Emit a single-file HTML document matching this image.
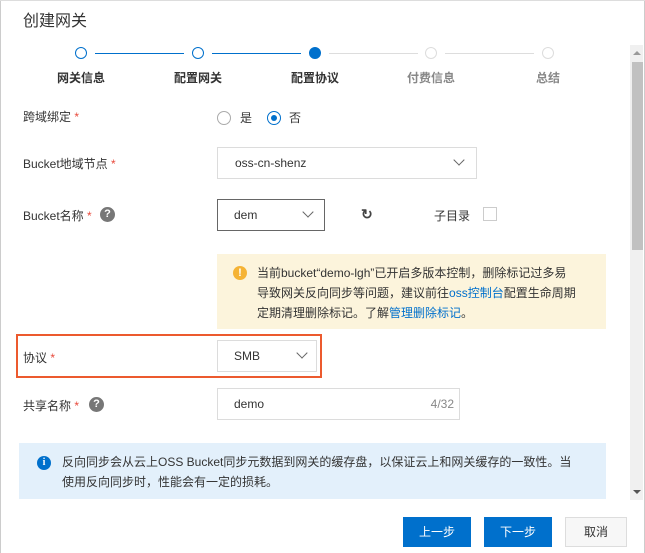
<!DOCTYPE html>
<html><head><meta charset="utf-8"><style>
*{box-sizing:border-box;margin:0;padding:0}
body{width:645px;height:553px;background:#fff;position:relative;overflow:hidden;font-family:"Liberation Sans","Noto Sans CJK SC",sans-serif;color:#333;font-size:12px}
.a{position:absolute}
.lbl{position:absolute;left:23px;font-size:12px;color:#333}
.req{color:#e84a3c}
.box{position:absolute;border:1px solid #dcdcdc;background:#fff}
.chev{position:absolute;width:8px;height:8px;border-right:1.5px solid #666;border-bottom:1.5px solid #666;transform:rotate(45deg)}
.step{position:absolute;top:47px;width:12px;height:12px;border-radius:50%;border:1.5px solid #0070cc;background:#fff}
.sl{position:absolute;top:53px;height:1px}
.st{position:absolute;top:69px;font-size:12px;font-weight:bold;width:80px;text-align:center}
.q{position:absolute;width:15px;height:15px;border-radius:50%;background:#777;color:#fff;font-size:11px;font-weight:bold;text-align:center;line-height:15px}
.btn{position:absolute;top:517px;height:30px;font-size:12px;text-align:center;line-height:30px}
</style></head><body>
<div class="a" style="left:0;top:0;width:1px;height:553px;background:#ccc"></div>
<div class="a" style="left:644px;top:0;width:1px;height:553px;background:#ccc"></div>
<div class="a" style="left:0;top:0;width:645px;height:1px;background:#ddd"></div>
<div class="a" style="left:23px;top:7px;font-size:16px;color:#333">创建网关</div>

<div class="step" style="left:75px"></div>
<div class="sl" style="left:95px;width:89px;background:#0070cc"></div>
<div class="step" style="left:192px"></div>
<div class="sl" style="left:212px;width:89px;background:#0070cc"></div>
<div class="step" style="left:309px;background:#0070cc;border-color:#0070cc"></div>
<div class="sl" style="left:329px;width:89px;background:#ddd"></div>
<div class="step" style="left:425px;border-color:#ddd"></div>
<div class="sl" style="left:445px;width:89px;background:#ddd"></div>
<div class="step" style="left:542px;border-color:#ddd"></div>
<div class="st" style="left:41px;color:#333">网关信息</div>
<div class="st" style="left:158px;color:#333">配置网关</div>
<div class="st" style="left:275px;color:#333">配置协议</div>
<div class="st" style="left:391px;color:#888">付费信息</div>
<div class="st" style="left:508px;color:#888">总结</div>

<div class="lbl" style="top:108px">跨域绑定 <span class="req">*</span></div>
<div class="a" style="left:217px;top:111px;width:14px;height:14px;border-radius:50%;border:1px solid #aaa"></div>
<div class="a" style="left:240px;top:109px">是</div>
<div class="a" style="left:267px;top:111px;width:14px;height:14px;border-radius:50%;border:1.5px solid #0070cc"><div class="a" style="left:2.5px;top:2.5px;width:6px;height:6px;border-radius:50%;background:#0070cc"></div></div>
<div class="a" style="left:289px;top:109px">否</div>

<div class="lbl" style="top:155px">Bucket地域节点 <span class="req">*</span></div>
<div class="box" style="left:217px;top:147px;width:260px;height:32px"><span class="a" style="left:17px;top:8px">oss-cn-shenz</span><div class="chev" style="left:237px;top:8px"></div></div>

<div class="lbl" style="top:207px">Bucket名称 <span class="req">*</span></div>
<div class="q" style="left:100px;top:207px">?</div>
<div class="box" style="left:217px;top:199px;width:108px;height:32px;border-color:#666"><span class="a" style="left:16px;top:8px">dem</span><div class="chev" style="left:86px;top:8px"></div></div>
<div class="a" style="left:361px;top:206px;font-size:14px;font-weight:bold;color:#444">↻</div>
<div class="a" style="left:434px;top:207px">子目录</div>
<div class="a" style="left:483px;top:207px;width:14px;height:14px;border:1px solid #ccc"></div>

<div class="a" style="left:217px;top:254px;width:389px;height:75px;background:#fcf4dc"></div>
<div class="a" style="left:233px;top:266px;width:14px;height:14px;border-radius:50%;background:#f5b335;color:#fff;font-size:11px;font-weight:bold;text-align:center;line-height:14px">!</div>
<div class="a" style="left:257px;top:263px;width:350px;line-height:20px;color:#333">当前bucket“demo-lgh”已开启多版本控制，删除标记过多易<br>导致网关反向同步等问题，建议前往<span style="color:#0070cc">oss控制台</span>配置生命周期<br>定期清理删除标记。了解<span style="color:#0070cc">管理删除标记</span>。</div>

<div class="a" style="left:16px;top:334px;width:306px;height:44px;border:2px solid #ec5a2e"></div>
<div class="lbl" style="top:349px">协议 <span class="req">*</span></div>
<div class="box" style="left:217px;top:340px;width:100px;height:32px"><span class="a" style="left:16px;top:8px">SMB</span><div class="chev" style="left:80px;top:8px"></div></div>

<div class="lbl" style="top:397px">共享名称 <span class="req">*</span></div>
<div class="q" style="left:89px;top:397px">?</div>
<div class="box" style="left:217px;top:388px;width:243px;height:32px"><span class="a" style="left:16px;top:8px">demo</span><span class="a" style="right:5px;top:8px;color:#888">4/32</span></div>

<div class="a" style="left:19px;top:443px;width:587px;height:56px;background:#e3f0fb"></div>
<div class="a" style="left:37px;top:456px;width:14px;height:14px;border-radius:50%;background:#0070cc;color:#fff;font-size:10px;font-weight:bold;text-align:center;line-height:14px;font-family:'Liberation Serif',serif">i</div>
<div class="a" style="left:62px;top:452px;width:540px;line-height:20px;color:#333">反向同步会从云上OSS Bucket同步元数据到网关的缓存盘，以保证云上和网关缓存的一致性。当<br>使用反向同步时，性能会有一定的损耗。</div>

<div class="a" style="left:630px;top:45px;width:13px;height:455px;background:#f0f0f0"></div>
<div class="a" style="left:632px;top:62px;width:11px;height:188px;background:#c1c1c1"></div>
<div class="a" style="left:633px;top:51px;width:0;height:0;border-left:4px solid transparent;border-right:4px solid transparent;border-bottom:4px solid #999"></div>
<div class="a" style="left:633px;top:490px;width:0;height:0;border-left:4px solid transparent;border-right:4px solid transparent;border-top:4px solid #555"></div>

<div class="btn" style="left:403px;width:68px;background:#0070cc;color:#fff">上一步</div>
<div class="btn" style="left:484px;width:68px;background:#0070cc;color:#fff">下一步</div>
<div class="btn" style="left:565px;width:62px;background:#f7f7f7;border:1px solid #ddd;color:#333;line-height:28px">取消</div>
</body></html>
